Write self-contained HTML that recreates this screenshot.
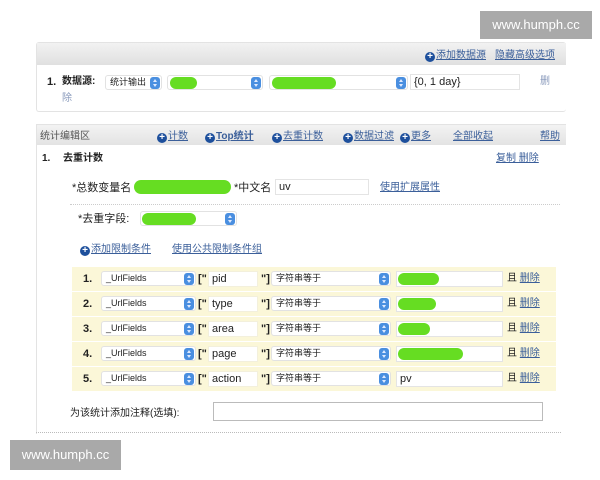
<!DOCTYPE html>
<html><head><meta charset="utf-8"><style>
*{margin:0;padding:0;box-sizing:border-box}
body{width:600px;height:480px;background:#fff;position:relative;overflow:hidden;font-family:"Liberation Sans","Noto Sans CJK SC",sans-serif;font-size:10px;color:#222;line-height:12px}
.a{position:absolute;white-space:nowrap;line-height:12px}
.lk{color:#3b5f9a;text-decoration:underline}
.b{font-weight:bold}
.g{position:absolute;background:#66dd22;border-radius:7px}
.sel{position:absolute;background:#fff;border:1px solid #e2e2e2;border-radius:3px;height:15px;font-size:9px;line-height:13px;padding-left:4px}
.arr{position:absolute;width:10px;height:12px;background:#4a8fe0;border-radius:3px;top:1px;right:1px}
.arr:before{content:"";position:absolute;left:3px;top:2px;border:2px solid transparent;border-bottom:3px solid #dfeaff;border-top:none}
.arr:after{content:"";position:absolute;left:3px;top:7px;border:2px solid transparent;border-top:3px solid #dfeaff;border-bottom:none}
.inp{position:absolute;background:#fff;border:1px solid #e4e4e4;height:16px;font-size:11px;line-height:14px;padding-left:3px}
.pl{display:inline-block;width:10px;height:10px;border-radius:50%;background:#1d4f9c;color:#fff;font-size:10px;line-height:10px;text-align:center;font-weight:bold;vertical-align:-1px;margin-right:1px;text-decoration:none}
.row{position:absolute;left:72px;width:484px;height:24px;background:#fbf7d8}
</style></head><body>
<div class="a" style="left:480px;top:11px;width:112px;height:28px;background:#a9a9a9;color:#fff;font-size:13px;line-height:28px;text-align:center">www.humph.cc</div>

<div class="a" style="left:36px;top:42px;width:530px;height:70px;border:1px solid #e3e3e3;border-right:none;border-radius:3px"></div>
<div class="a" style="left:37px;top:43px;width:529px;height:22px;background:linear-gradient(#f2f2f2,#e0e0e0)"></div>
<div class="a lk" style="left:425px;top:50px"><span class="pl">+</span>添加数据源</div>
<div class="a lk" style="left:495px;top:50px">隐藏高级选项</div>
<div class="a b" style="left:47px;top:76px;font-size:11px">1.</div>
<div class="a b" style="left:62px;top:76px;font-size:10px">数据源:</div>
<div class="sel" style="left:105px;top:75px;width:57px">统计输出<div class="arr"></div></div>
<div class="sel" style="left:167px;top:75px;width:96px"><div class="arr"></div></div>
<div class="g" style="left:170px;top:77px;width:27px;height:12px"></div>
<div class="sel" style="left:269px;top:75px;width:139px"><div class="arr"></div></div>
<div class="g" style="left:272px;top:77px;width:64px;height:12px"></div>
<div class="inp" style="left:410px;top:74px;width:110px">{0, 1 day}</div>
<div class="a" style="left:540px;top:76px;color:#8899bb">删</div>
<div class="a" style="left:62px;top:93px;color:#8899bb">除</div>

<div class="a" style="left:36px;top:124px;width:530px;height:310px;border:1px solid #e3e3e3;border-right:none;border-bottom:none"></div>
<div class="a" style="left:37px;top:125px;width:529px;height:20px;background:linear-gradient(#f3f3f3,#e3e3e3)"></div>
<div class="a" style="left:40px;top:131px;color:#555">统计编辑区</div>
<div class="a lk" style="left:157px;top:131px"><span class="pl">+</span>计数</div>
<div class="a lk b" style="left:205px;top:131px"><span class="pl">+</span>Top统计</div>
<div class="a lk" style="left:272px;top:131px"><span class="pl">+</span>去重计数</div>
<div class="a lk" style="left:343px;top:131px"><span class="pl">+</span>数据过滤</div>
<div class="a lk" style="left:400px;top:131px"><span class="pl">+</span>更多</div>
<div class="a lk" style="left:453px;top:131px">全部收起</div>
<div class="a lk" style="left:540px;top:131px">帮助</div>
<div class="a b" style="left:42px;top:153px">1.</div>
<div class="a b" style="left:63px;top:153px">去重计数</div>
<div class="a lk" style="left:496px;top:153px">复制 删除</div>
<div class="a" style="left:72px;top:182px;font-size:11px">*总数变量名</div>
<div class="g" style="left:134px;top:180px;width:97px;height:14px"></div>
<div class="a" style="left:234px;top:182px;font-size:11px">*中文名</div>
<div class="inp" style="left:275px;top:179px;width:94px">uv</div>
<div class="a lk" style="left:380px;top:182px">使用扩展属性</div>
<div class="a" style="left:70px;top:204px;width:490px;border-top:1px dotted #ccc"></div>
<div class="a" style="left:78px;top:213px;font-size:11px">*去重字段:</div>
<div class="sel" style="left:140px;top:211px;width:97px"><div class="arr"></div></div>
<div class="g" style="left:142px;top:213px;width:54px;height:12px"></div>

<div class="a lk" style="left:80px;top:244px"><span class="pl">+</span>添加限制条件</div>
<div class="a lk" style="left:172px;top:244px">使用公共限制条件组</div>

<div class="row" style="top:267px"></div>
<div class="row" style="top:292px"></div>
<div class="row" style="top:317px"></div>
<div class="row" style="top:342px"></div>
<div class="row" style="top:367px"></div>

<div id="rows"></div>
<script>
var f=["pid","type","area","page","action"],gw=[41,38,32,65,0],h="";
for(var i=0;i<5;i++){var t=271+25*i;
h+='<div class="a b" style="left:83px;top:'+(t+2)+'px;font-size:11px">'+(i+1)+'.</div>'+
'<div class="sel" style="left:101px;top:'+t+'px;width:95px">_UrlFields<div class="arr"></div></div>'+
'<div class="a b" style="left:198px;top:'+(t+2)+'px;font-size:11px">["</div>'+
'<div class="inp" style="left:208px;top:'+t+'px;width:50px;border-color:#f3f0dc">'+f[i]+'</div>'+
'<div class="a b" style="left:261px;top:'+(t+2)+'px;font-size:11px">"]</div>'+
'<div class="sel" style="left:271px;top:'+t+'px;width:120px">字符串等于<div class="arr"></div></div>'+
'<div class="inp" style="left:396px;top:'+t+'px;width:107px">'+(i==4?'pv':'')+'</div>'+
(gw[i]?'<div class="g" style="left:398px;top:'+(t+2)+'px;width:'+gw[i]+'px;height:12px"></div>':'')+
'<div class="a" style="left:507px;top:'+(t+2)+'px">且 <span class="lk">删除</span></div>';}
document.getElementById("rows").innerHTML=h;
</script>

<div class="a" style="left:70px;top:408px;font-size:10px">为该统计添加注释(选填):</div>
<div class="a" style="left:213px;top:402px;width:330px;height:19px;border:1px solid #bbb;background:#fff"></div>
<div class="a" style="left:36px;top:432px;width:525px;border-top:1px dotted #bbb"></div>

<div class="a" style="left:10px;top:440px;width:111px;height:30px;background:#a9a9a9;color:#fff;font-size:13px;line-height:30px;text-align:center">www.humph.cc</div>
</body></html>
